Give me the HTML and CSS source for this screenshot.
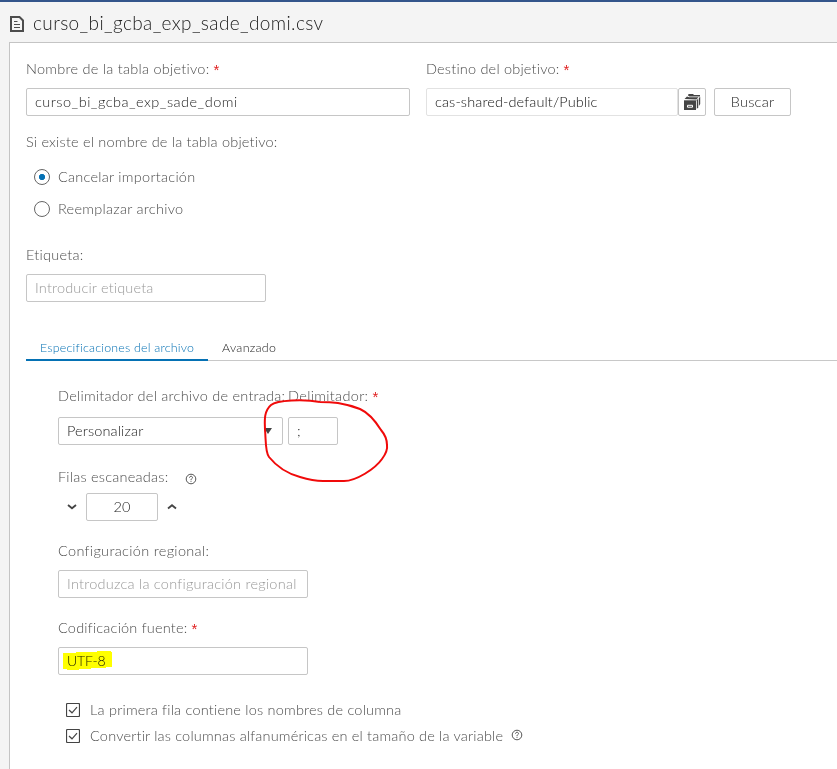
FILE: index.html
```html
<!DOCTYPE html>
<html lang="es">
<head>
<meta charset="utf-8">
<title>Importar archivo</title>
<link rel="stylesheet" href="styles.css">
</head>
<body>
<header class="header">
  <svg class="file-icon" width="16" height="18" viewBox="0 0 16 18"><path d="M2 2H10.5L14 5.5V16H2Z" fill="none" stroke="#4c4c4c" stroke-width="2"/><path d="M5 6.5H8.5M5 9.5H11M5 12.5H11" stroke="#4c4c4c" stroke-width="1"/></svg>
  <h1 class="title"><span class="t t-title">curso_bi_gcba_exp_sade_domi.csv</span></h1>
</header>
<main class="panel">
  <div class="target-row">
    <div class="field name-field">
      <div class="label"><span class="t t-name">Nombre de la tabla objetivo:</span><b class="req">*</b></div>
      <div class="input"><span class="t t-file">curso_bi_gcba_exp_sade_domi</span></div>
    </div>
    <div class="field">
      <div class="label"><span class="t t-dest">Destino del objetivo:</span><b class="req">*</b></div>
      <div class="dest-controls">
        <div class="input dest-input"><span class="t t-cas">cas-shared-default/Public</span></div>
        <div class="lib-button"><svg width="18" height="18" viewBox="0 0 18 18"><g fill="#444"><path d="M5.5 1H10L11 2H17V3.4H6.5L5 2.6Z"/><path d="M1.5 6L4 3.6L6 4.2H15.5L13.4 6.4Z"/><path d="M1 7.3H13V17H1Z"/><path d="M13.8 7.2L15.2 5.6V14.2L13.8 16Z"/><path d="M15.9 5L17.2 3.8V11L15.9 13Z"/></g><path d="M4.5 12.3V14.2H9.5V12.3Z" fill="none" stroke="#fff"/></svg></div>
        <div class="button"><span class="t t-buscar">Buscar</span></div>
      </div>
    </div>
  </div>
  <div class="label exists-label"><span class="t t-exists">Si existe el nombre de la tabla objetivo:</span></div>
  <div class="radios">
    <div class="radio-row"><i class="radio checked"></i><span class="t t-cancel">Cancelar importación</span></div>
    <div class="radio-row"><i class="radio"></i><span class="t t-replace">Reemplazar archivo</span></div>
  </div>
  <div class="field tag-field">
    <div class="label"><span class="t t-tag">Etiqueta:</span></div>
    <div class="input placeholder"><span class="t t-tagph">Introducir etiqueta</span></div>
  </div>
  <nav class="tabs">
    <div class="tab active"><span class="t t-tab1">Especificaciones del archivo</span></div>
    <div class="tab"><span class="t t-tab2">Avanzado</span></div>
  </nav>
  <section class="specs">
    <div class="delim-row">
      <div class="field delim-select">
        <div class="label"><span class="t t-delim">Delimitador del archivo de entrada:</span></div>
        <div class="input select"><span class="t t-custom">Personalizar</span><i class="arrow"></i></div>
      </div>
      <div class="field delim-char">
        <div class="label"><span class="t t-char">Delimitador:</span><b class="req">*</b></div>
        <div class="input"><span class="semi">;</span></div>
      </div>
      <svg class="red-mark" width="140" height="100" viewBox="255 390 140 100"><path d="M320 402C304 399 277 400 271 405C263 412 265 423 265 430C266 439 265 452 269 457C277 467 289 474 300 477Q313 481 323 481H344C356 481 375 469 382 459Q388 451 387 445Q387 437 381 430C376 422 369 413 360 409Q350 405 338 403Q330 402 320 402" fill="none" stroke="#f00a0a" stroke-width="2"/></svg>
    </div>
    <div class="label rows-label"><span class="t t-rows">Filas escaneadas:</span><svg class="help" width="12" height="12" viewBox="0 0 12 12"><circle cx="6" cy="6" r="4.8"/><path d="M4.5 4.7C4.5 2.8 7.5 2.8 7.5 4.6C7.5 5.6 6 5.6 6 7M6 7.8V8.8"/></svg></div>
    <div class="spinner">
      <svg class="chev" width="12" height="10" viewBox="0 0 12 10"><path d="M2 3L6 6.3L10 3"/></svg>
      <div class="input count"><span class="t t-count">20</span></div>
      <svg class="chev" width="12" height="10" viewBox="0 0 12 10"><path d="M2 6.5L6 3.2L10 6.5"/></svg>
    </div>
    <div class="field locale-field">
      <div class="label"><span class="t t-locale">Configuración regional:</span></div>
      <div class="input placeholder"><span class="t t-localeph">Introduzca la configuración regional</span></div>
    </div>
    <div class="field encoding-field">
      <div class="label"><span class="t t-enc">Codificación fuente:</span><b class="req">*</b></div>
      <div class="input encoding-input"><span class="t t-utf">UTF-8</span><svg class="highlight" width="50" height="20" viewBox="0 0 50 20"><path d="M0 2H13V1H34V0H48V1H49V16H43V17H28V18H16V19H4V18H0Z" fill="#ff0"/></svg></div>
    </div>
    <div class="checks">
      <div class="check-row"><svg class="box" width="14" height="14" viewBox="0 0 14 14"><rect x=".5" y=".5" width="13" height="13" rx="1"/><path d="M3 7L6 9.8L11 4.2"/></svg><span class="t t-first">La primera fila contiene los nombres de columna</span></div>
      <div class="check-row"><svg class="box" width="14" height="14" viewBox="0 0 14 14"><rect x=".5" y=".5" width="13" height="13" rx="1"/><path d="M3 7L6 9.8L11 4.2"/></svg><span class="t t-conv">Convertir las columnas alfanuméricas en el tamaño de la variable</span><svg class="help inline-help" width="12" height="12" viewBox="0 0 12 12"><circle cx="6" cy="6" r="4.8"/><path d="M4.5 4.7C4.5 2.8 7.5 2.8 7.5 4.6C7.5 5.6 6 5.6 6 7M6 7.8V8.8"/></svg></div>
    </div>
  </section>
</main>
</body>
</html>
```
FILE: styles.css
```css
* { box-sizing: border-box; }
body { margin: 0; height: 769px; overflow: hidden; background: #f4f4f4; border-top: 2px solid #34558b; font: 300 14.5px/20px Lato, "Open Sans", sans-serif; color: #4c4c4c; font-variant-ligatures: none; }
.t { white-space: nowrap; }
.t-title { letter-spacing: .38px; }
.t-name { letter-spacing: .26px; }
.t-file { letter-spacing: .5px; }
.t-dest { letter-spacing: .2px; }
.t-cas { letter-spacing: .12px; }
.t-buscar { letter-spacing: .23px; }
.t-exists { letter-spacing: .205px; }
.t-cancel { letter-spacing: .26px; }
.t-replace { letter-spacing: .27px; }
.t-tag { letter-spacing: .26px; }
.t-tagph { letter-spacing: .17px; }
.t-tab1 { letter-spacing: .21px; }
.t-tab2 { letter-spacing: .3px; }
.t-delim { letter-spacing: .25px; }
.t-custom { letter-spacing: .14px; }
.t-char { letter-spacing: .33px; }
.t-rows { letter-spacing: .23px; }
.t-locale { letter-spacing: .32px; }
.t-localeph { letter-spacing: .24px; }
.t-enc { letter-spacing: .2px; }
.t-utf { font-size: 14px; letter-spacing: -.16px; }
.t-first { letter-spacing: .21px; }
.t-conv { letter-spacing: .185px; }
.header { height: 40px; padding: 4px 0 0 9px; display: flex; align-items: center; gap: 8px; }
.title { margin: 0 0 2px; font-size: 19px; font-weight: 300; color: #222; }
.panel { margin-left: 9px; height: 727px; background: #fff; border: solid #c4c4c4; border-width: 1px 0 0 1px; padding: 16px 0 0 16px; }
.target-row { display: flex; gap: 16px; }
.field { display: flex; flex-direction: column; gap: 9px; }
.name-field { width: 384px; }
.label { height: 20px; display: flex; white-space: nowrap; }
.req { color: #e02020; font: 400 15px/22px "Liberation Sans", sans-serif; margin-left: 4px; }
.input { height: 28px; border: 1px solid #c6c6c6; border-radius: 2px; padding-left: 8px; display: flex; align-items: center; color: #222; background: #fff; }
.placeholder { color: #999; }
.dest-controls { display: flex; }
.dest-input { width: 252px; border-color: #e2e2e2; color: #111; }
.lib-button { width: 28px; height: 28px; border: 1px solid #c6c6c6; border-radius: 2px; display: grid; place-items: center; }
.button { margin-left: 8px; width: 77px; height: 28px; border: 1px solid #c6c6c6; border-radius: 2px; display: grid; place-items: center; color: #222; }
.exists-label { margin-top: 16px; }
.radios { margin-top: 15px; padding-left: 8px; display: flex; flex-direction: column; gap: 12px; }
.radio-row { display: flex; align-items: center; height: 20px; gap: 8px; }
.radio { width: 16px; height: 16px; border: 1px solid #666; border-radius: 50%; }
.checked { background: radial-gradient(circle, #0571b4 2.8px, transparent 3.4px); }
.tag-field { margin-top: 26px; width: 240px; }
.tabs { margin-top: 36px; height: 23px; display: flex; font-size: 12.4px; background: linear-gradient(#c8c8c8, #c8c8c8) 0 22px / 100% 1px no-repeat; }
.tab { padding: 0 14px; color: #222; }
.active { width: 182px; color: #0571b4; border-bottom: 2px solid #0571b4; }
.specs { padding: 25px 0 0 32px; }
.delim-row { display: flex; gap: 5px; position: relative; }
.delim-row .field { gap: 11px; }
.delim-select { width: 225px; }
.delim-char { width: 50px; }
.select { justify-content: space-between; padding-right: 10px; }
.arrow { border: solid transparent; border-width: 6px 4px 0; border-top-color: #444; }
.red-mark { position: absolute; left: 197px; top: 4px; }
.rows-label { margin-top: 22px; }
.help { margin: 6px 0 0 17px; fill: none; stroke: #555; stroke-width: 1; }
.inline-help { margin: 0 0 2px -2px; }
.spinner { margin-top: 6px; padding-left: 8px; display: flex; align-items: center; gap: 8px; }
.count { width: 72px; padding: 0; justify-content: center; }
.chev { fill: none; stroke: #444; stroke-width: 1.8; }
.locale-field { margin-top: 20px; width: 250px; }
.encoding-field { margin-top: 20px; width: 250px; }
.encoding-input { position: relative; }
.highlight { position: absolute; left: 4px; top: 3px; mix-blend-mode: multiply; }
.checks { margin-top: 25px; padding-left: 8px; display: flex; flex-direction: column; gap: 6px; }
.check-row { display: flex; align-items: center; gap: 10px; height: 20px; }
.box { fill: none; stroke: #444; stroke-width: 1.2; }
```
